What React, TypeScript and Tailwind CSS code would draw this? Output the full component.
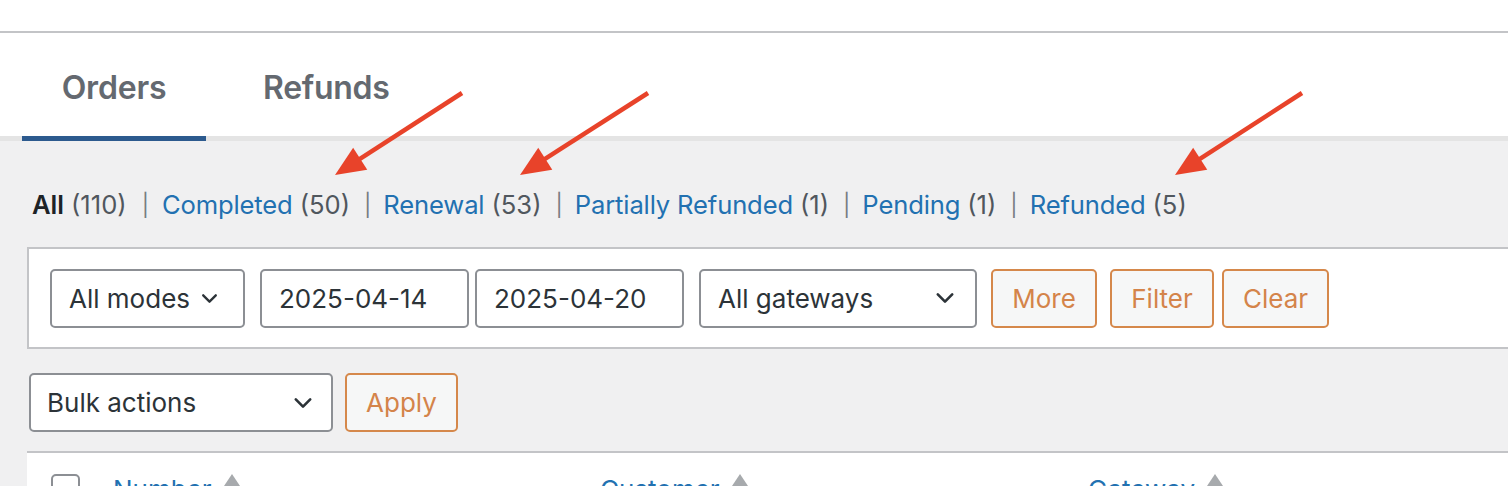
import React from 'react';

const Chevron: React.FC<{ className?: string }> = ({ className }) => (
  <svg viewBox="0 0 20 20" className={className} fill="none" stroke="#2c3338" strokeWidth="2.2" strokeLinecap="round" strokeLinejoin="round">
    <path d="M4 7 L10 13 L16 7" />
  </svg>
);

const SortTriangle: React.FC = () => (
  <svg viewBox="0 0 16 12" className="w-[16px] h-[12px] ml-[12px]">
    <path d="M8 0 L16 12 L0 12 Z" fill="#a7aaad" />
  </svg>
);

// annotation arrow, drawn from start point to the tip
const Arrow: React.FC<{ x1: number; y1: number; x2: number; y2: number }> = ({ x1, y1, x2, y2 }) => {
  const dx = x2 - x1;
  const dy = y2 - y1;
  const len = Math.sqrt(dx * dx + dy * dy);
  const ux = dx / len;
  const uy = dy / len;
  const headLen = 30;
  const half = 13;
  const bx = x2 - ux * headLen;
  const by = y2 - uy * headLen;
  const p1 = `${bx - uy * half},${by + ux * half}`;
  const p2 = `${bx + uy * half},${by - ux * half}`;
  return (
    <g>
      <line x1={x1} y1={y1} x2={bx + ux * 4} y2={by + uy * 4} stroke="#e8432a" strokeWidth="4.5" strokeLinecap="butt" />
      <polygon points={`${x2},${y2} ${p1} ${p2}`} fill="#e8432a" />
    </g>
  );
};

const statuses = [
  { label: 'Completed', count: 50 },
  { label: 'Renewal', count: 53 },
  { label: 'Partially Refunded', count: 1 },
  { label: 'Pending', count: 1 },
  { label: 'Refunded', count: 5 },
];

const Button: React.FC<{ label: string; className?: string }> = ({ label, className }) => (
  <button className={`h-[59px] rounded-[5px] border-2 border-[#d5884b] bg-[#f6f7f7] text-[#d4844a] text-[26px] ${className ?? ''}`}>
    {label}
  </button>
);

export default function App() {
  return (
    <div className="relative w-full h-[486px] overflow-hidden bg-[#f0f0f1] font-['Inter',sans-serif]">
      {/* top strip */}
      <div className="h-[33px] bg-white border-b-2 border-[#c3c4c7]" />

      {/* tabs */}
      <div className="bg-white h-[103px] flex items-start pl-[22px]">
        <div className="w-[184px] pt-[31px] text-center text-[32px] font-semibold text-[#646970] tracking-[-0.2px]">Orders</div>
        <div className="ml-[16px] px-[41px] pt-[31px] text-[32px] font-semibold text-[#646970] tracking-[-0.3px]">Refunds</div>
      </div>
      <div className="h-[5px] bg-[#e4e4e4] pl-[22px]">
        <div className="w-[184px] h-full bg-[#2c5a8e]" />
      </div>

      {/* status links */}
      <div className="h-[106px] flex items-center pl-[32px] pt-[22px] text-[25.6px] text-[#50575e]">
        <span className="font-semibold text-[#1d2327]">All</span>
        <span className="ml-[7px]">(110)</span>
        {statuses.map((s, i) => (
          <React.Fragment key={s.label}>
            <span className={`${i === 0 ? 'ml-[15px] mr-[13px]' : 'ml-[14px] mr-[12px]'} text-[22px] text-[#787c82]`}>|</span>
            <span className="text-[#2271b1] tracking-[-0.15px]">{s.label}</span>
            <span className="ml-[7px]">({s.count})</span>
          </React.Fragment>
        ))}
      </div>

      {/* filter bar */}
      <div className="ml-[27px] h-[102px] bg-white border-2 border-r-0 border-[#c3c4c7] flex items-center pl-[21px] text-[26px] text-[#2c3338]">
        <div className="h-[59px] w-[195px] rounded-[5px] border-2 border-[#8c8f94] flex items-center pl-[17px] gap-[9px]">
          <span>All modes</span>
          <Chevron className="w-[21px] h-[21px]" />
        </div>
        <div className="ml-[15px] h-[59px] w-[209px] rounded-[5px] border-2 border-[#8c8f94] flex items-center pl-[17px]">2025-04-14</div>
        <div className="ml-[6px] h-[59px] w-[209px] rounded-[5px] border-2 border-[#8c8f94] flex items-center pl-[17px]">2025-04-20</div>
        <div className="ml-[15px] h-[59px] w-[278px] rounded-[5px] border-2 border-[#8c8f94] flex items-center justify-between pl-[17px] pr-[18px]">
          <span>All gateways</span>
          <Chevron className="w-[24px] h-[24px]" />
        </div>
        <Button label="More" className="ml-[14px] w-[106px]" />
        <Button label="Filter" className="ml-[13px] w-[104px]" />
        <Button label="Clear" className="ml-[8px] w-[107px]" />
      </div>

      {/* bulk actions */}
      <div className="mt-[24px] ml-[29px] flex items-center text-[26px] text-[#2c3338]">
        <div className="h-[59px] w-[304px] rounded-[5px] border-2 border-[#8c8f94] bg-white flex items-center justify-between pl-[16px] pr-[16px]">
          <span>Bulk actions</span>
          <Chevron className="w-[24px] h-[24px]" />
        </div>
        <Button label="Apply" className="ml-[12px] w-[113px]" />
      </div>

      {/* table header */}
      <div className="mt-[19px] ml-[27px] h-[40px] bg-white border-t-2 border-[#c3c4c7] flex items-start pt-[21px] text-[26px] text-[#2271b1] leading-none">
        <div className="w-[29px] h-[29px] ml-[24px] rounded-[5px] border-2 border-[#8c8f94] bg-white" />
        <div className="ml-[33px] w-[487px] flex items-start">
          <span className="mt-[3px]">Number</span>
          <SortTriangle />
        </div>
        <div className="w-[488px] flex items-start">
          <span className="mt-[3px]">Customer</span>
          <SortTriangle />
        </div>
        <div className="flex items-start">
          <span className="mt-[3px]">Gateway</span>
          <SortTriangle />
        </div>
      </div>

      {/* annotation arrows */}
      <svg className="absolute inset-0 w-full h-full pointer-events-none" viewBox="0 0 1508 486" preserveAspectRatio="none">
        <Arrow x1={462} y1={93} x2={335} y2={175} />
        <Arrow x1={648} y1={93} x2={520} y2={175} />
        <Arrow x1={1302} y1={93} x2={1175} y2={175} />
      </svg>
    </div>
  );
}
